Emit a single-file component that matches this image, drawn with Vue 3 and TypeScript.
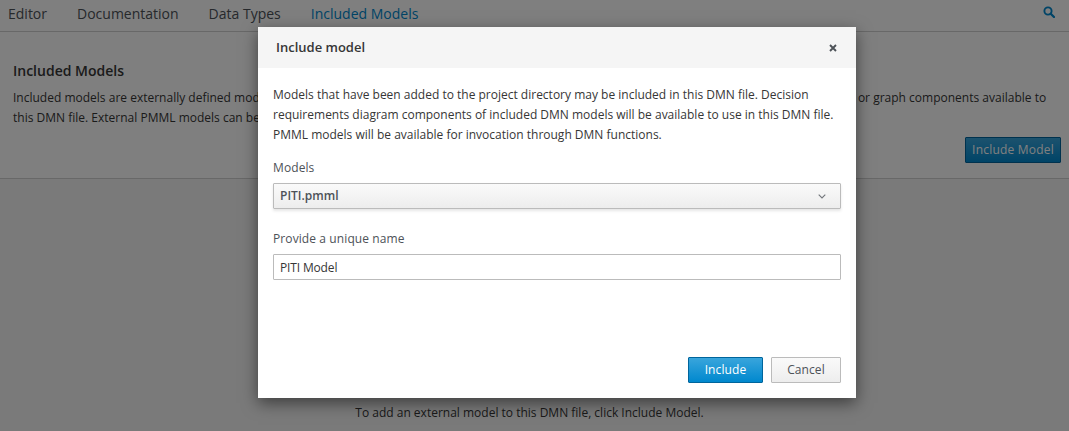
<script setup lang="ts">
const tabs: string[] = ['Editor', 'Documentation', 'Data Types', 'Included Models']
</script>

<template>
  <div class="page">
    <nav class="tabs">
      <a v-for="t in tabs" :key="t" class="tab" :class="{ active: t === 'Included Models' }">{{ t }}</a>
      <svg class="search" viewBox="0 0 12 12" width="12" height="12">
        <circle cx="5" cy="5" r="3.6" fill="none" stroke="currentColor" stroke-width="1.9" />
        <path d="M7.7 7.7 11 11" stroke="currentColor" stroke-width="2.3" stroke-linecap="round" />
      </svg>
    </nav>
    <section class="intro">
      <h2>Included Models</h2>
      <p>Included models are externally defined models that have been added to this DMN file. Included DMN models make the decision requirements diagram or graph components available to this DMN file. External PMML models can be invoked from DMN boxed functions.</p>
      <div class="intro-actions"><button class="btn-primary-dim">Include Model</button></div>
    </section>
    <div class="empty"><span>To add an external model to this DMN file, click Include Model.</span></div>

    <div class="backdrop"></div>
    <div class="modal">
      <header class="modal-head">
        <h3>Include model</h3>
        <svg class="close" viewBox="0 0 8 8" width="8" height="8">
          <path d="M1 1 7 7M7 1 1 7" stroke="currentColor" stroke-width="1.9" />
        </svg>
      </header>
      <div class="modal-body">
        <p>Models that have been added to the project directory may be included in this DMN file. Decision requirements diagram components of included DMN models will be available to use in this DMN file. PMML models will be available for invocation through DMN functions.</p>
        <label class="field-label">Models</label>
        <div class="select">
          <span>PITI.pmml</span>
          <svg viewBox="0 0 8 5" width="8" height="5">
            <path d="M.7.7 4 4 7.3.7" fill="none" stroke="currentColor" stroke-width="1.1" />
          </svg>
        </div>
        <label class="field-label second">Provide a unique name</label>
        <div class="input">PITI Model</div>
      </div>
      <footer class="modal-foot">
        <button class="btn include">Include</button>
        <button class="btn cancel">Cancel</button>
      </footer>
    </div>
  </div>
</template>

<style>
html, body { margin: 0; padding: 0; }
</style>

<style scoped>
.page {
  position: relative;
  width: 1069px;
  height: 431px;
  overflow: hidden;
  background: #fff;
  font-family: "Open Sans", "Noto Sans", sans-serif;
  font-size: 12px;
  color: #363636;
  display: flex;
  flex-direction: column;
}
.tabs {
  height: 32px;
  box-sizing: border-box;
  border-bottom: 1px solid #d1d1d1;
  display: flex;
  gap: 30px;
  padding: 0 8px;
  align-items: flex-start;
  flex: none;
}
.tab { font-size: 14px; line-height: 28px; color: #4d5258; }
.tab.active { color: #0088ce; }
.search { margin-left: auto; margin-right: 6px; margin-top: 6px; color: #0088ce; }
.intro {
  height: 147px;
  box-sizing: border-box;
  border-bottom: 1px solid #d1d1d1;
  padding: 29px 8px 0 13px;
  flex: none;
}
.intro h2 { margin: 0; font-size: 14px; line-height: 19px; font-weight: 600; }
.intro p { margin: 8px 0 0; line-height: 20px; width: 1040px; word-spacing: .03px; }
.intro-actions { display: flex; justify-content: flex-end; margin-top: 9px; }
.btn-primary-dim {
  width: 96px; height: 26px; box-sizing: border-box;
  border: 1px solid #00659c; border-radius: 1px;
  background: linear-gradient(#39a5dc, #0088ce);
  color: #fff; font: inherit; letter-spacing: .2px; padding: 0 0 2px;
}
.empty {
  flex: 1;
  background: #f5f5f5;
  padding: 225px 10px 0 0;
  text-align: center;
  line-height: 18px;
}
.backdrop { position: absolute; inset: 0; background: rgba(0, 0, 0, .5); }
.modal {
  position: absolute;
  left: 258px; top: 27px;
  width: 598px; height: 371px;
  background: #fff;
  box-shadow: 0 5px 15px rgba(0, 0, 0, .5);
  display: flex;
  flex-direction: column;
}
.modal-head {
  height: 41px; flex: none;
  background: #f5f5f5;
  padding: 0 19px 2px 18px;
  box-sizing: border-box;
  display: flex; align-items: center; justify-content: space-between;
}
.modal-head h3 { margin: 0; font-size: 13px; font-weight: 600; color: #363636; }
.close { color: #4d5258; margin-top: 2px; }
.modal-body { padding: 17px 15px 0; flex: 1; }
.modal-body p { margin: 0; line-height: 20px; color: #363636; }
.field-label { display: block; margin-top: 13px; line-height: 20px; color: #4d5258; font-weight: 500; letter-spacing: .1px; }
.field-label.second { margin-top: 20px; }
.select {
  height: 26px; box-sizing: border-box; margin-top: 5px;
  border: 1px solid #bbb; border-radius: 1px;
  background: linear-gradient(#fafafa, #ededed);
  box-shadow: 0 2px 3px rgba(3, 3, 3, .1);
  display: flex; align-items: center; justify-content: space-between;
  padding: 0 14px 2px 6px;
  color: #4d5258; font-weight: 600;
}
.select svg { color: #72767b; margin-top: 2px; }
.input {
  height: 26px; box-sizing: border-box; margin-top: 5px;
  border: 1px solid #bbb; border-radius: 1px;
  background: #fff;
  padding: 0 6px; line-height: 25px; letter-spacing: -.15px;
}
.modal-foot { display: flex; justify-content: flex-end; gap: 8px; padding: 0 15px 15px; }
.btn {
  height: 26px; box-sizing: border-box; border-radius: 1px; font: inherit; padding: 0 0 2px; letter-spacing: .1px;
}
.include {
  width: 75px; border: 1px solid #00659c;
  background: linear-gradient(#39a5dc, #0088ce); color: #fff;
}
.cancel {
  width: 70px; border: 1px solid #bbb;
  background: linear-gradient(#fafafa, #ededed); color: #4d5258;
}
</style>
